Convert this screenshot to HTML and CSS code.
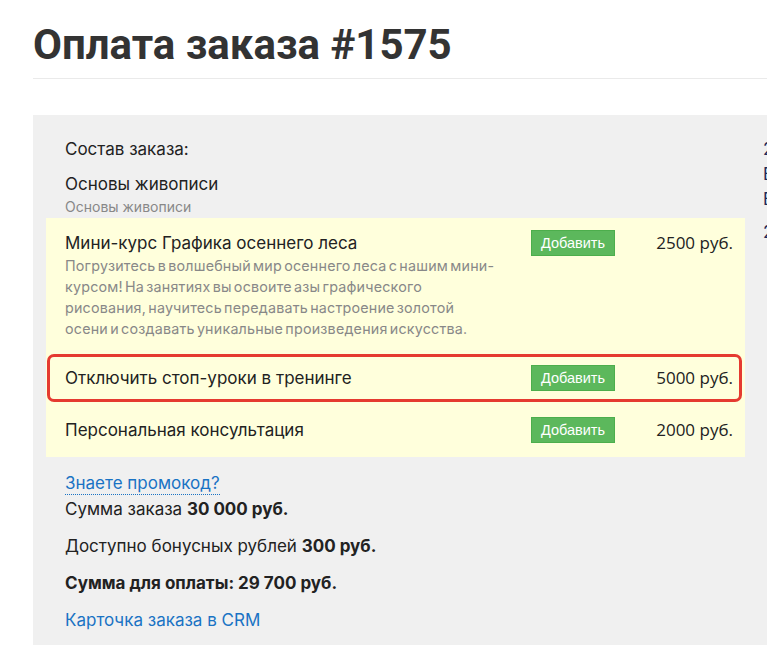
FILE: index.html
```html
<!DOCTYPE html>
<html lang="ru">
<head>
<meta charset="UTF-8" />
<meta name="viewport" content="width=device-width, initial-scale=1" />
<title>Оплата заказа #1575</title>
<link rel="stylesheet" href="styles.css">
</head>
<body>
  <div class="page">
    <h1 class="page-title">Оплата заказа #1575</h1>
    <hr class="title-line">

    <div class="order">
      <div class="order-main">
        <p class="order-caption">Состав заказа:</p>
        <div class="order-item">
          <div class="item-name">Основы живописи</div>
          <div class="item-desc">Основы живописи</div>
        </div>

        <div class="offers">
          <div class="offer">
            <div class="offer-info">
              <div class="offer-name">Мини-курс Графика осеннего леса</div>
              <div class="offer-desc">Погрузитесь в волшебный мир осеннего леса с нашим мини-курсом! На занятиях вы освоите азы графического рисования, научитесь передавать настроение золотой осени и создавать уникальные произведения искусства.</div>
            </div>
            <button class="add-btn">Добавить</button>
            <div class="offer-price">2500 руб.</div>
          </div>

          <div class="offer offer-marked">
            <div class="offer-info">
              <div class="offer-name">Отключить стоп-уроки в тренинге</div>
            </div>
            <button class="add-btn">Добавить</button>
            <div class="offer-price">5000 руб.</div>
            <span class="mark"></span>
          </div>

          <div class="offer">
            <div class="offer-info">
              <div class="offer-name">Персональная консультация</div>
            </div>
            <button class="add-btn">Добавить</button>
            <div class="offer-price">2000 руб.</div>
          </div>
        </div>

        <a class="promo-link" href="#">Знаете промокод?</a>
        <p class="sum-line">Сумма заказа <b>30 000 руб.</b></p>
        <p class="sum-line">Доступно бонусных рублей <b>300 руб.</b></p>
        <p class="sum-line"><b>Сумма для оплаты: 29 700 руб.</b></p>
        <p class="sum-line"><a class="crm-link" href="#">Карточка заказа в CRM</a></p>
      </div>

      <div class="order-side">
        <p class="side-title">2 товара</p>
        <p class="side-line">Бонусы</p>
        <p class="side-line">Баланс</p>
        <p class="side-title side-total">2 500</p>
      </div>
    </div>
  </div>
</body>
</html>
```

FILE: styles.css
```css
* {
  margin: 0;
  padding: 0;
  box-sizing: border-box;
}

html, body {
  overflow: hidden;
}

body {
  background: #fff;
  color: #222;
  font-family: Inter, "Noto Sans", Arial, sans-serif;
  font-size: 17px;
}

.page {
  margin-left: 33px;
  width: 1000px;
}

.page-title {
  font-family: Roboto, Arial, sans-serif;
  font-weight: 700;
  font-size: 42px;
  line-height: 48px;
  color: #333;
  padding-top: 21px;
}

.title-line {
  border: 0;
  border-top: 1px solid #eaeaea;
  margin-top: 9px;
}

.order {
  display: flex;
  background: #f0f0f0;
  margin-top: 36px;
}

.order-main {
  width: 725px;
  padding: 22px 13px 13px;
}

.order-caption,
.item-name {
  line-height: 24px;
  padding-left: 19px;
}

.item-name {
  margin-top: 11px;
}

.item-desc {
  font-size: 14px;
  line-height: 22px;
  color: #888;
  padding-left: 19px;
}

/* доп. предложения */
.offers {
  background: #ffffdc;
}

.offer {
  position: relative;
  display: flex;
  align-items: flex-start;
  padding: 13px 12px 14px 19px;
}

.offer-info {
  flex: 1;
}

.offer-name {
  line-height: 24px;
  color: #222;
}

.offer-desc {
  font-size: 14.3px;
  line-height: 21px;
  color: #888;
  letter-spacing: 0.2px;
  word-spacing: -2px;
  max-width: 430px;
}

.add-btn {
  background: #5cb85c;
  border: 1px solid #4cae4c;
  color: #fff;
  font-family: "Liberation Sans", Arial, sans-serif;
  font-size: 14.5px;
  height: 26px;
  width: 84px;
  margin-top: -1px;
  cursor: pointer;
}

.offer-price {
  width: 118px;
  text-align: right;
  font-family: "Open Sans", Arial, sans-serif;
  font-size: 17px;
  line-height: 24px;
  color: #222;
}

.mark {
  position: absolute;
  top: 1px;
  left: 1px;
  right: 3px;
  bottom: 3px;
  border: 3px solid #e53a30;
  border-radius: 7px;
  pointer-events: none;
}

.promo-link {
  display: inline-block;
  margin: 15px 0 2px 19px;
  line-height: 22px;
  color: #1a73c4;
  text-decoration: none;
  border-bottom: 1px dotted #1a73c4;
}

.sum-line {
  line-height: 24px;
  padding-left: 19px;
  margin-bottom: 13px;
}

.sum-line:last-child {
  margin-bottom: 0;
}

.sum-line b {
  font-weight: 700;
}

.crm-link {
  color: #1a73c4;
  text-decoration: none;
}

.order-side {
  padding: 22px 0 0 5px;
  color: #1e2c5a;
}

.side-title {
  line-height: 24px;
}

.side-line {
  line-height: 24px;
  margin-top: 1px;
}

.side-total {
  margin-top: 9px;
}
```
